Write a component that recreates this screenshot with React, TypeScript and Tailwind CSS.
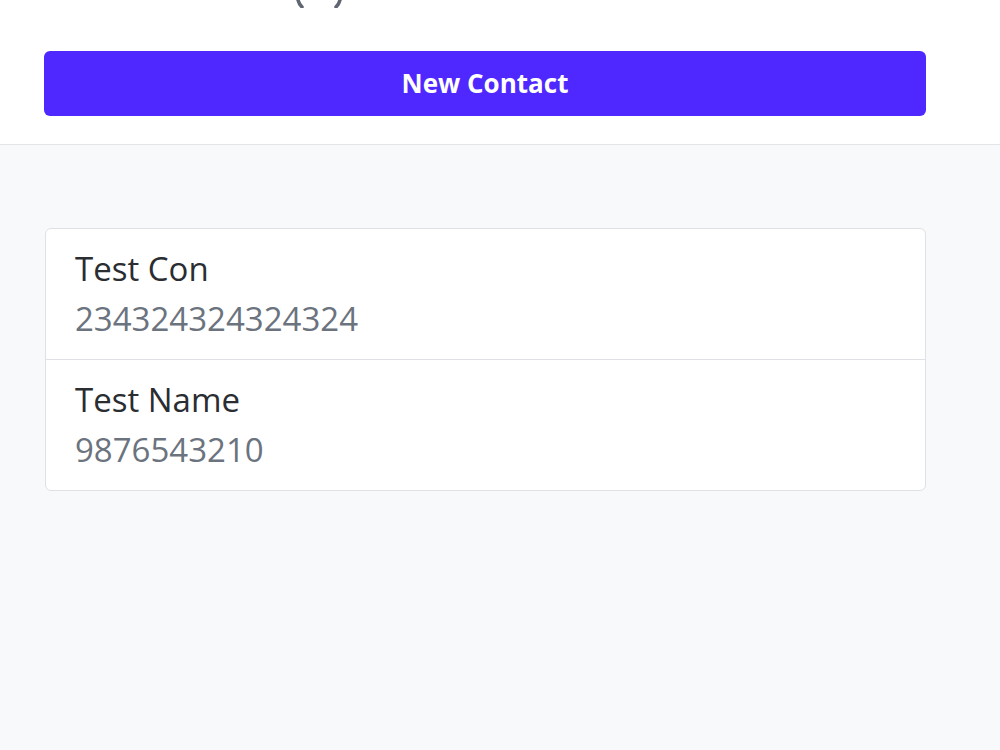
const contacts = [
  { name: 'Test Con', phone: '234324324324324' },
  { name: 'Test Name', phone: '9876543210' },
]

export default function App() {
  return (
    <div className="min-h-[750px] bg-[#f8f9fb] font-['Open_Sans',sans-serif]">
      <header className="border-b border-[#e3e5e9] bg-white px-[44px] pb-[28px]">
        <div className="flex h-[51px] items-start pl-[252px]">
          <svg width="46" height="8" viewBox="0 0 46 8">
            <path d="M2 0 Q3 4 6 7" stroke="#5f6672" strokeWidth="3.5" fill="none" strokeLinecap="round" />
            <path d="M44 0 Q43 4 40 7" stroke="#5f6672" strokeWidth="3.5" fill="none" strokeLinecap="round" />
          </svg>
        </div>
        <button
          type="button"
          className="flex h-[65px] w-[882px] items-center justify-center rounded-[6px] bg-[#4f27ff] text-[26px] font-bold text-white"
        >
          New Contact
        </button>
      </header>

      <main className="px-[45px] pt-[83px]">
        <ul className="w-[881px] overflow-hidden rounded-[6px] border border-[#dfe1e4] bg-white">
          {contacts.map((contact, i) => (
            <li
              key={contact.name}
              className={i > 0 ? 'border-t border-[#dfe1e4] px-[29px] pt-[15px] pb-[15px]' : 'px-[29px] pt-[15px] pb-[15px]'}
            >
              <p className="text-[33px] leading-[50px] text-[#2a2d31]">{contact.name}</p>
              <p className="text-[33px] leading-[50px] text-[#6b737e]">{contact.phone}</p>
            </li>
          ))}
        </ul>
      </main>
    </div>
  )
}
